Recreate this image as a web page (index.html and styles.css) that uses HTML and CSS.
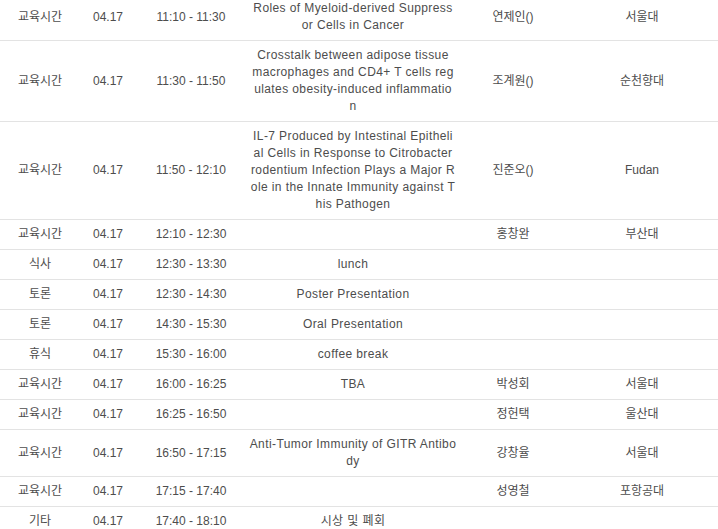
FILE: index.html
```html
<!DOCTYPE html>
<html lang="ko">
<head>
<meta charset="utf-8">
<title>일정표</title>
<link rel="stylesheet" href="styles.css">
</head>
<body>
<table class="schedule">
  <colgroup>
    <col class="c-type"><col class="c-date"><col class="c-time"><col class="c-title"><col class="c-name"><col class="c-org">
  </colgroup>
  <tbody>
    <tr><td>교육시간</td><td>04.17</td><td>11:10 - 11:30</td><td class="title">Roles of Myeloid-derived Suppress<br>or Cells in Cancer</td><td>연제인()</td><td>서울대</td></tr>
    <tr><td>교육시간</td><td>04.17</td><td>11:30 - 11:50</td><td class="title">Crosstalk between adipose tissue<br>macrophages and CD4+ T cells reg<br>ulates obesity-induced inflammatio<br>n</td><td>조계원()</td><td>순천향대</td></tr>
    <tr><td>교육시간</td><td>04.17</td><td>11:50 - 12:10</td><td class="title">IL-7 Produced by Intestinal Epitheli<br>al Cells in Response to Citrobacter<br>rodentium Infection Plays a Major R<br>ole in the Innate Immunity against T<br>his Pathogen</td><td>진준오()</td><td>Fudan</td></tr>
    <tr><td>교육시간</td><td>04.17</td><td>12:10 - 12:30</td><td class="title"></td><td>홍창완</td><td>부산대</td></tr>
    <tr><td>식사</td><td>04.17</td><td>12:30 - 13:30</td><td class="title">lunch</td><td></td><td></td></tr>
    <tr><td>토론</td><td>04.17</td><td>12:30 - 14:30</td><td class="title">Poster Presentation</td><td></td><td></td></tr>
    <tr><td>토론</td><td>04.17</td><td>14:30 - 15:30</td><td class="title">Oral Presentation</td><td></td><td></td></tr>
    <tr><td>휴식</td><td>04.17</td><td>15:30 - 16:00</td><td class="title">coffee break</td><td></td><td></td></tr>
    <tr><td>교육시간</td><td>04.17</td><td>16:00 - 16:25</td><td class="title">TBA</td><td>박성회</td><td>서울대</td></tr>
    <tr><td>교육시간</td><td>04.17</td><td>16:25 - 16:50</td><td class="title"></td><td>정헌택</td><td>울산대</td></tr>
    <tr><td>교육시간</td><td>04.17</td><td>16:50 - 17:15</td><td class="title">Anti-Tumor Immunity of GITR Antibo<br>dy</td><td>강창율</td><td>서울대</td></tr>
    <tr><td>교육시간</td><td>04.17</td><td>17:15 - 17:40</td><td class="title"></td><td>성영철</td><td>포항공대</td></tr>
    <tr><td>기타</td><td>04.17</td><td>17:40 - 18:10</td><td class="title">시상 및 폐회</td><td></td><td></td></tr>
  </tbody>
</table>
</body>
</html>
```
FILE: styles.css
```css
html, body {
  margin: 0;
  padding: 0;
  background: #fff;
}
body {
  overflow: hidden;
  font-family: "Liberation Sans", "Noto Sans CJK KR", sans-serif;
  font-size: 12px;
  color: #4d4d4d;
}
.schedule {
  width: 718px;
  margin-top: -6px;
  border-collapse: collapse;
  table-layout: fixed;
}
.c-type { width: 80px; }
.c-date { width: 56px; }
.c-time { width: 110px; }
.c-title { width: 214px; }
.c-name { width: 106px; }
.c-org { width: 152px; }
.schedule td {
  padding: 6px 0;
  line-height: 17px;
  text-align: center;
  vertical-align: middle;
  border-bottom: 1px solid #e3e3e3;
  white-space: nowrap;
}
.schedule td.title {
  letter-spacing: 0.4px;
}
```
